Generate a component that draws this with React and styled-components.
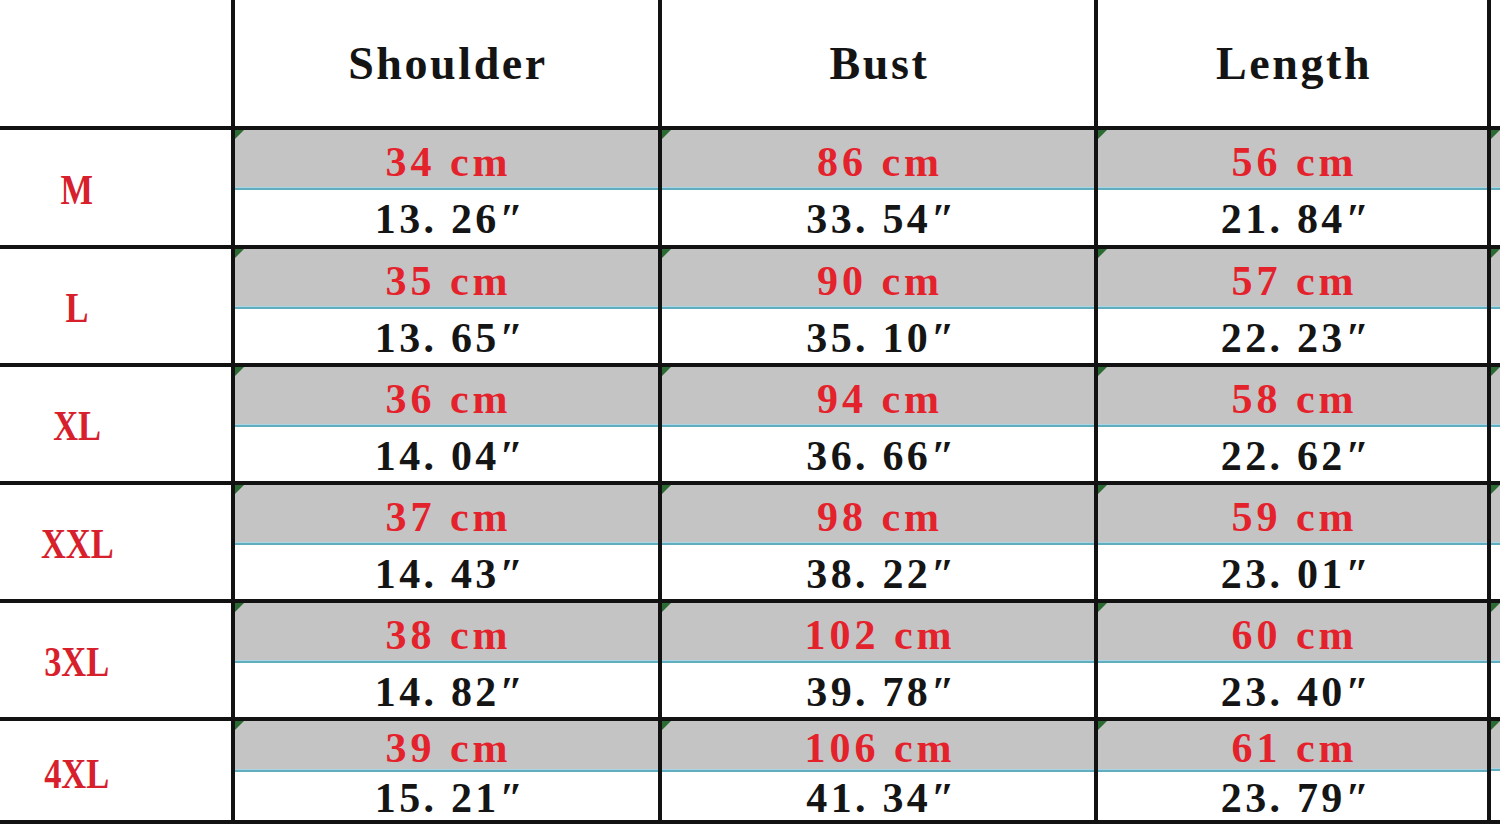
import React from "react";
import styled, { createGlobalStyle } from "styled-components";

const GlobalStyle = createGlobalStyle`
  html, body {
    margin: 0;
    padding: 0;
    background: #ffffff;
    overflow: hidden;
  }
  * { box-sizing: border-box; }
`;

const Chart = styled.div`
  width: 1500px;
  height: 824px;
  display: grid;
  grid-template-columns: 231px 423px 432px 389px 1fr;
  grid-template-rows: 126px 115px 114px 114px 114px 114px 99px;
  gap: 4px;
  padding-bottom: 4px;
  background: #121212;
  overflow: hidden;
  font-family: "Liberation Serif", "Times New Roman", serif;
`;

const HeaderCell = styled.div`
  background: #ffffff;
  display: flex;
  align-items: center;
  justify-content: center;
  padding-left: 3px;
  font-size: 46px;
  font-weight: 700;
  letter-spacing: 2.6px;
  color: #141414;
`;

const SizeCell = styled.div`
  background: #ffffff;
  display: flex;
  align-items: center;
  justify-content: center;
  padding-right: 77px;
  padding-top: ${(p) => (p.$compact ? "6px" : "4px")};
`;

const SizeLabel = styled.span`
  display: inline-block;
  font-size: 42px;
  font-weight: 700;
  color: #d8202c;
  transform: scaleX(0.82);
`;

const DataCell = styled.div`
  position: relative;
  background: #ffffff;
  display: flex;
  flex-direction: column;

  &::before {
    content: "";
    position: absolute;
    top: 0;
    left: 0;
    width: 0;
    height: 0;
    border-top: 9px solid #2c6a33;
    border-right: 9px solid transparent;
  }
`;

const Metric = styled.div`
  flex: 0 0 ${(p) => (p.$compact ? 47 : 57)}px;
  background: #c4c4c4;
  display: flex;
  align-items: center;
  justify-content: center;
  padding-top: 6px;
  padding-left: 4px;
  font-size: 42px;
  font-weight: 700;
  letter-spacing: 4px;
  color: #e4222c;
  line-height: 1;
`;

const Rule = styled.div`
  flex: 0 0 3px;
  background: #62adbd;
  border-top: 1px solid #a9d6e4;
  box-shadow: 0 1px 0 #d6f6fb;
`;

const Imperial = styled.div`
  flex: 1 1 auto;
  background: #ffffff;
  display: flex;
  align-items: center;
  justify-content: center;
  padding-top: 3px;
  padding-left: 8px;
  font-size: 42px;
  font-weight: 700;
  letter-spacing: 3.3px;
  color: #151515;
  line-height: 1;
`;

const columns = ["Shoulder", "Bust", "Length"];

const rows = [
  { size: "M", values: [[34, "13.26"], [86, "33.54"], [56, "21.84"]] },
  { size: "L", values: [[35, "13.65"], [90, "35.10"], [57, "22.23"]] },
  { size: "XL", values: [[36, "14.04"], [94, "36.66"], [58, "22.62"]] },
  { size: "XXL", values: [[37, "14.43"], [98, "38.22"], [59, "23.01"]] },
  { size: "3XL", values: [[38, "14.82"], [102, "39.78"], [60, "23.40"]] },
  { size: "4XL", values: [[39, "15.21"], [106, "41.34"], [61, "23.79"]] },
];

const inches = (s) => s.replace(".", ". ") + "\u2033";

export default function App() {
  return (
    <>
      <GlobalStyle />
      <Chart>
        <HeaderCell />
        {columns.map((c) => (
          <HeaderCell key={c}>{c}</HeaderCell>
        ))}
        <HeaderCell />
        {rows.map((r, i) => {
          const compact = i === rows.length - 1;
          return (
            <React.Fragment key={r.size}>
              <SizeCell $compact={compact}>
                <SizeLabel>{r.size}</SizeLabel>
              </SizeCell>
              {r.values.map(([cm, inch], j) => (
                <DataCell key={j}>
                  <Metric $compact={compact}>{cm} cm</Metric>
                  <Rule />
                  <Imperial>{inches(inch)}</Imperial>
                </DataCell>
              ))}
              <DataCell>
                <Metric $compact={compact} />
                <Rule />
                <Imperial />
              </DataCell>
            </React.Fragment>
          );
        })}
      </Chart>
    </>
  );
}
